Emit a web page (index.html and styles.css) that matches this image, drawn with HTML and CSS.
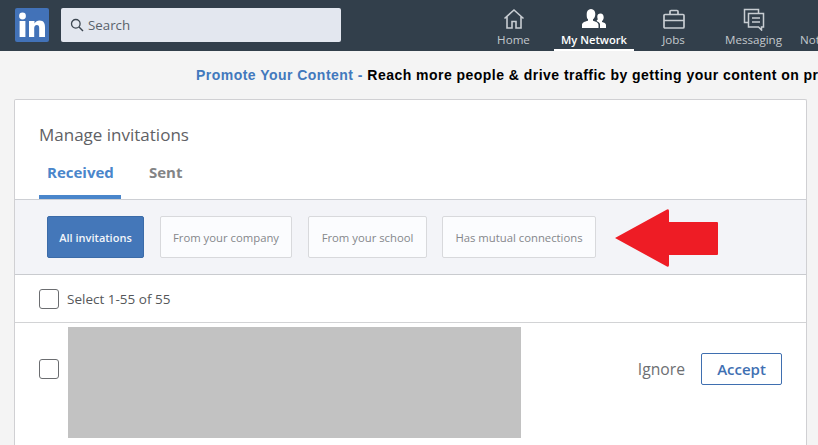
FILE: index.html
```html
<!DOCTYPE html>
<html lang="en">
<head>
<meta charset="utf-8">
<title>Manage invitations</title>
<link rel="stylesheet" href="styles.css">
</head>
<body>
<header class="topbar">
  <div class="logo"><svg viewBox="0 0 34 34" width="34" height="34"><rect width="34" height="34" rx="2" fill="#4272b8"/><circle cx="7.5" cy="8" r="3.4" fill="#fff"/><rect x="4.6" y="13" width="5.8" height="16" fill="#fff"/><path d="M14 13h5.5v2.400c1-1.700 2.900-2.800 5-2.800 4.300 0 5.500 2.800 5.500 6.800V29h-5.800v-8.800c0-2-.6-3.200-2.300-3.200-1.900 0-2.700 1.400-2.700 3.300V29H14z" fill="#fff"/></svg></div>
  <div class="search">
    <svg class="search-icon" viewBox="0 0 14 14" width="14" height="14"><circle cx="5.800" cy="5.800" r="4.300" fill="none" stroke="#3c4650" stroke-width="1.300"/><path d="M9 9l4 4" stroke="#3c4650" stroke-width="1.500" fill="none"/></svg>
    <span>Search</span>
  </div>
  <nav class="nav">
    <a class="nav-item home">
      <svg viewBox="0 0 24 24" width="24" height="24"><path d="M2.500 11.500L12 3l9.500 8.500M5 9.500V21h5v-6.500h4V21h5V9.500" fill="none" stroke="#c8cdd2" stroke-width="1.600"/></svg>
      <span>Home</span>
    </a>
    <a class="nav-item network active">
      <svg viewBox="0 0 26 24" width="26" height="24"><path d="M10 2c2.800 0 4.300 2.200 4.300 5 0 2.400-1 4.300-2.300 5.300v1.500c3 .8 5.500 2 5.500 4V21H1v-3.200c0-2 2.800-3.200 6-4v-1.500C5.700 11.300 5.700 9.400 5.700 7 5.700 4.200 7.200 2 10 2z" fill="#fff"/><path d="M19.500 6.500c2 0 3.200 1.500 3.200 3.700 0 1.700-.7 3.100-1.700 3.800v1c2 .6 4 1.400 4 2.900V21h-6v-3.500c0-1.500-1.500-2.800-3.500-3.600 .5-.5 1-1 1.300-1.600-.4-.8-.5-1.800-.5-2.600 0-2.200 1.200-3.200 3.200-3.200z" fill="#fff"/></svg>
      <span>My Network</span>
    </a>
    <a class="nav-item jobs">
      <svg viewBox="0 0 24 24" width="24" height="24"><path d="M3 7.500h18a1 1 0 0 1 1 1V20a1 1 0 0 1-1 1H3a1 1 0 0 1-1-1V8.500a1 1 0 0 1 1-1zM8 7.500V4.500a1 1 0 0 1 1-1h6a1 1 0 0 1 1 1v3M2 13.500h20" fill="none" stroke="#c8cdd2" stroke-width="1.700"/></svg>
      <span>Jobs</span>
    </a>
    <a class="nav-item messaging">
      <svg viewBox="0 0 24 24" width="24" height="24"><path d="M6 15.500H2.500V2.500h14V6" fill="none" stroke="#c8cdd2" stroke-width="1.500"/><path d="M6.500 6.500h15V20h-2v3l-3-3H6.500zM10 11h8M10 15h8" fill="none" stroke="#c8cdd2" stroke-width="1.500"/></svg>
      <span>Messaging</span>
    </a>
    <a class="nav-item notif"><span>Notifications</span></a>
  </nav>
</header>

<main class="page">
  <p class="promo"><span class="promo-lead">Promote Your Content - </span>Reach more people &amp; drive traffic by getting your content on premium sites</p>

  <section class="card">
    <div class="card-head">
      <h1 class="title">Manage invitations</h1>
      <div class="tabs">
        <a class="tab active">Received</a>
        <a class="tab">Sent</a>
      </div>
    </div>
    <div class="filters">
      <button class="filter selected">All invitations</button>
      <button class="filter company">From your company</button>
      <button class="filter school">From your school</button>
      <button class="filter mutual">Has mutual connections</button>
      <svg class="arrow" viewBox="0 0 103 60" width="103" height="60"><path d="M0 30L52 1.500Q54 .5 54 3V14H102a1 1 0 0 1 1 1V46a1 1 0 0 1-1 1H54V57Q54 59.500 52 58.500Z" fill="#ee1c25"/></svg>
    </div>
    <div class="select-row">
      <span class="check"></span>
      <span class="select-label">Select 1-55 of 55</span>
    </div>
    <div class="invite">
      <span class="check"></span>
      <div class="redacted"></div>
      <div class="actions">
        <button class="ignore">Ignore</button>
        <button class="accept">Accept</button>
      </div>
    </div>
  </section>
</main>
</body>
</html>
```
FILE: styles.css
```css
* { box-sizing: border-box; }
html, body { margin: 0; height: 100%; overflow: hidden; }
body { background: #f4f4f4; font-family: "Open Sans", "Noto Sans", sans-serif; width: 818px; }

.topbar { height: 51px; background: #323f4b; display: flex; align-items: flex-start; padding: 8px 0 0 15px; position: relative; }
.logo { width: 34px; height: 34px; flex: none; }
.logo svg { display: block; }
.search { width: 280px; height: 34px; margin-left: 12px; flex: none; background: #e3e7ef; border-radius: 2px; display: flex; align-items: center; padding-left: 9px; gap: 4px; color: #59626b; font-size: 13.300px; }
.nav { display: flex; margin-left: 132px; margin-top: -8px; height: 51px; flex: none; }
.nav-item { height: 51px; display: flex; flex-direction: column; align-items: center; color: #c3c8cd; font-size: 11.600px; padding-top: 7px; white-space: nowrap; flex: none; }
.nav-item svg { display: block; height: 24px; flex: none; }
.nav-item span { line-height: 16px; margin-top: 1px; }
.home { width: 81px; }
.network { width: 80px; border-bottom: 2px solid #fff; color: #fff; font-weight: 600; font-size: 11.200px; }
.jobs { width: 79px; }
.messaging { width: 81px; }
.notif { width: 80px; align-items: flex-start; padding-top: 31px; padding-left: 6px; }

.page { padding: 0 11px 0 14px; }
.promo { margin: 0; height: 48px; padding: 14px 0 0 182px; width: 1000px; font: bold 14px/20px "Liberation Sans", Arial, sans-serif; letter-spacing: .47px; color: #000; white-space: nowrap; }
.promo-lead { color: #4279bd; }

.card { width: 793px; background: #fff; border: 1px solid #d0d0d3; border-bottom: 0; border-radius: 2px 2px 0 0; }
.card-head { height: 99px; padding: 23px 0 0 24px; }
.title { margin: 0; font-size: 17px; line-height: 24px; font-weight: 400; color: #5f6165; }
.tabs { display: flex; margin-top: 5px; height: 47px; }
.tab { height: 47px; font-size: 15px; line-height: 26px; padding-top: 7px; font-weight: 700; color: #838486; }
.tab.active { width: 82px; padding-left: 8px; color: #4a86cb; border-bottom: 4px solid #4a86cb; margin-right: 28px; }
.filters { height: 76px; background: #f3f4f8; border-top: 1px solid #cdcfd4; border-bottom: 1px solid #c9cbcf; display: flex; align-items: center; padding-left: 32px; position: relative; }
.filter { height: 42px; font: 400 11.300px "Open Sans", sans-serif; border: 1px solid #d8d9dc; background: #fbfcfe; color: #85878b; border-radius: 2px; padding: 1px 0 0; margin-right: 16px; flex: none; }
.filter.selected { width: 97px; background: #4477b9; border-color: #3b6ba8; color: #f2f5fa; font-weight: 600; font-size: 11px; }
.company { width: 132px; }
.school { width: 119px; margin-right: 15px; }
.mutual { width: 154px; }
.arrow { position: absolute; left: 600px; top: 8px; }
.select-row { height: 48px; border-bottom: 1px solid #d2d3d5; display: flex; align-items: center; padding-left: 24px; }
.check { width: 20px; height: 20px; border: 1px solid #6b6d70; border-radius: 3px; background: #fff; flex: none; }
.select-label { margin-left: 8px; font-size: 13.500px; color: #55575a; }
.invite { height: 123px; display: flex; align-items: flex-start; padding: 4px 24px 0 24px; }
.invite .check { margin-top: 32px; }
.redacted { width: 453px; height: 111px; margin-left: 9px; background: #c2c2c2; flex: none; }
.actions { display: flex; align-items: center; margin-left: auto; margin-top: 26px; gap: 16px; }
.ignore { border: 0; background: none; padding: 0; font: 400 15.700px "Open Sans", sans-serif; color: #6d6f72; }
.accept { width: 81px; height: 32px; padding: 0; border: 1px solid #3f6fb0; border-radius: 2px; background: #fff; color: #3f70b2; font: 600 15px "Open Sans", sans-serif; }
```
